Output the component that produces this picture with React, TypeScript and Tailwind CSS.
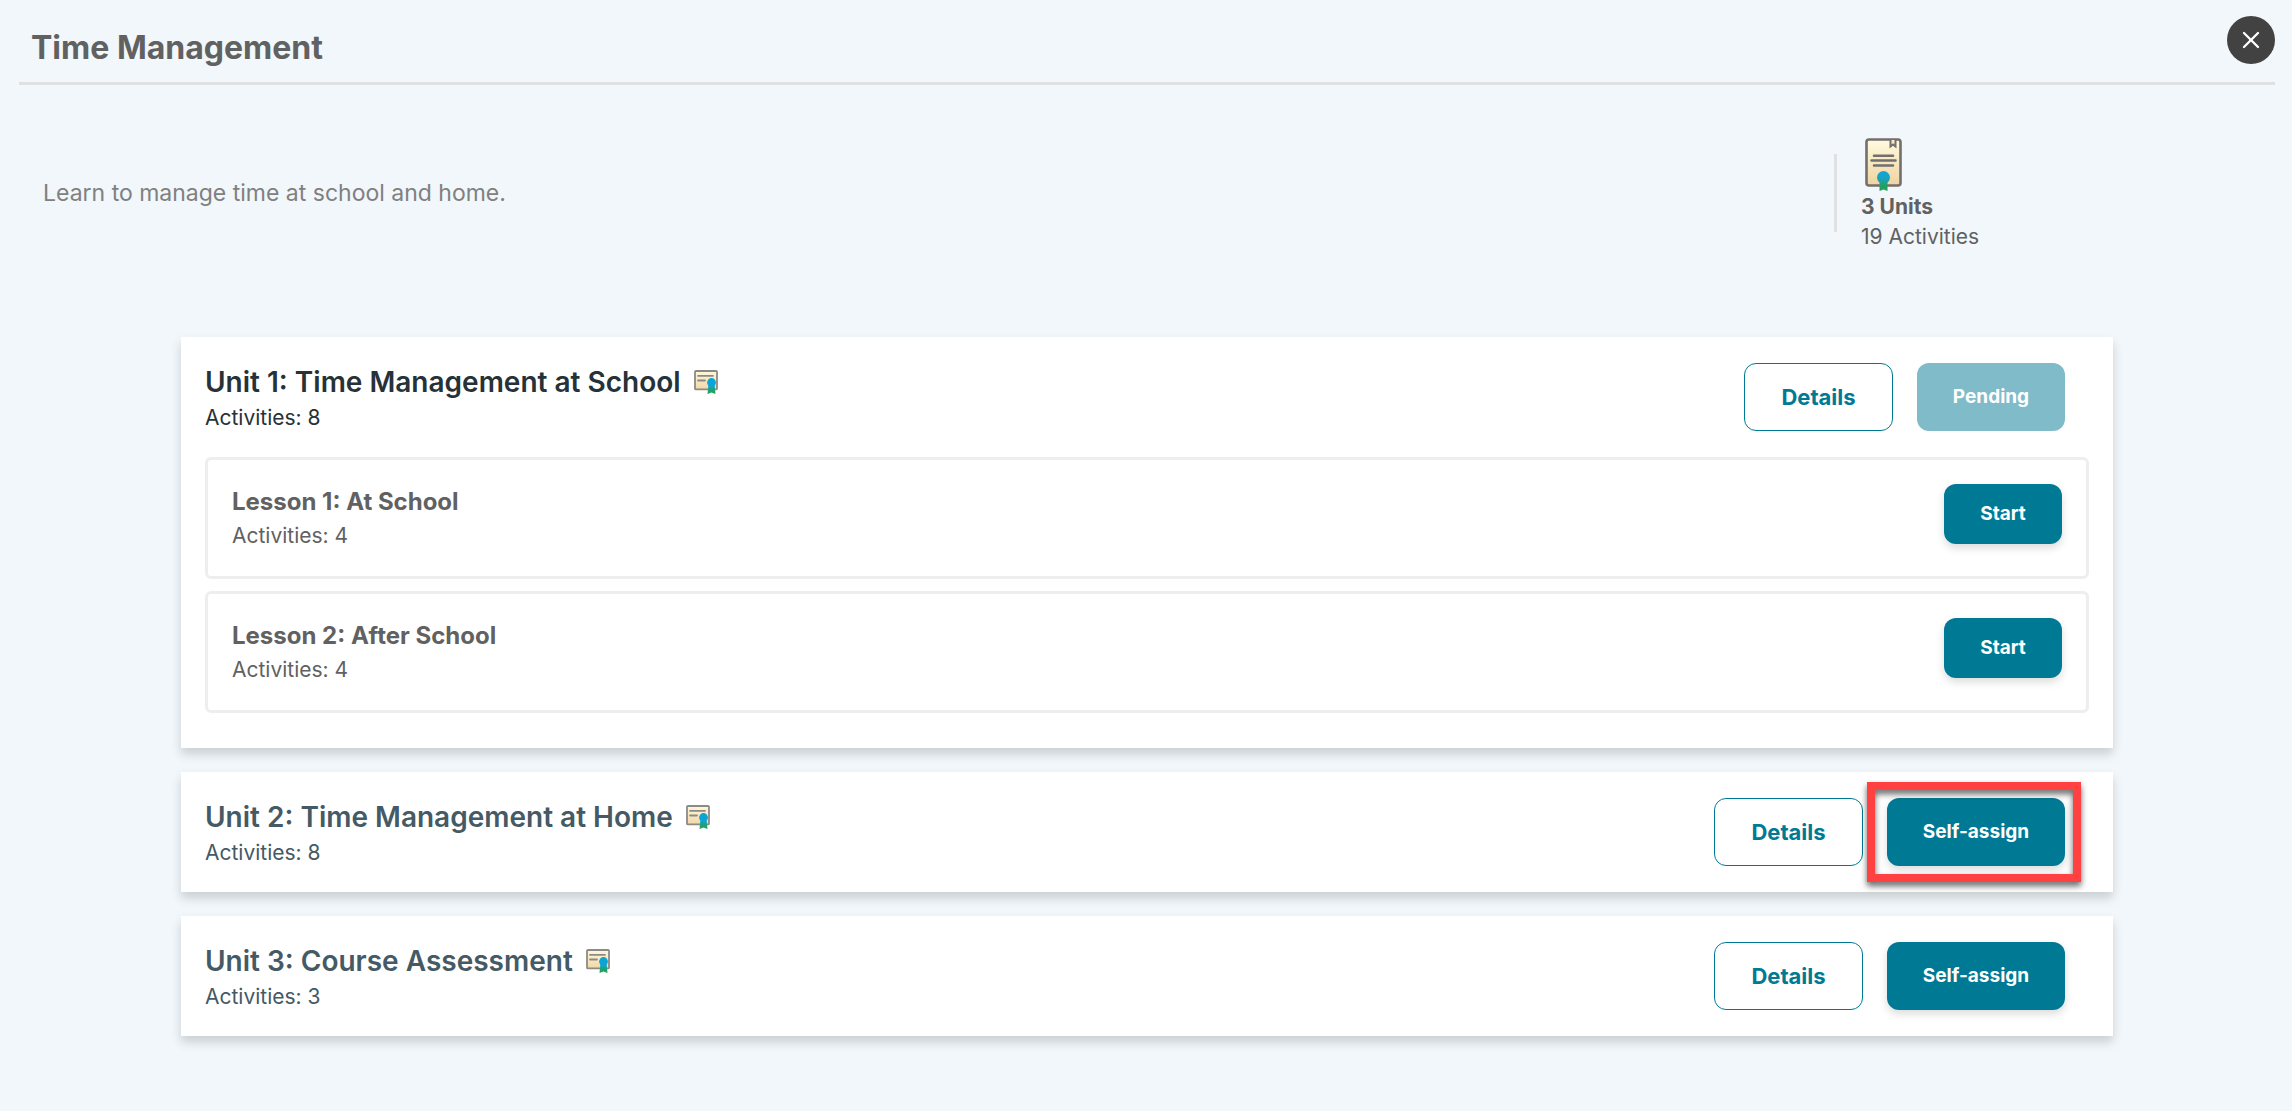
import { X } from 'lucide-react';

interface Lesson {
  title: string;
  activities: number;
}

interface Unit {
  title: string;
  activities: number;
  pending?: boolean;
  highlighted?: boolean;
  lessons?: Lesson[];
}

const units: Unit[] = [
  {
    title: 'Unit 1: Time Management at School',
    activities: 8,
    pending: true,
    lessons: [
      { title: 'Lesson 1: At School', activities: 4 },
      { title: 'Lesson 2: After School', activities: 4 },
    ],
  },
  { title: 'Unit 2: Time Management at Home', activities: 8, highlighted: true },
  { title: 'Unit 3: Course Assessment', activities: 3 },
];

function CourseIcon() {
  return (
    <svg width="42" height="58" viewBox="0 0 42 58" fill="none" aria-hidden="true">
      <defs>
        <linearGradient id="course-paper" x1="0" y1="0" x2="0" y2="1">
          <stop offset="0" stopColor="#fffbe0" />
          <stop offset="1" stopColor="#f0d3a0" />
        </linearGradient>
        <linearGradient id="course-ribbon" gradientUnits="userSpaceOnUse" x1="0" y1="37" x2="0" y2="57">
          <stop offset="0.3" stopColor="#16a3cc" />
          <stop offset="0.8" stopColor="#22a05c" />
        </linearGradient>
      </defs>
      <rect x="5.500" y="5.500" width="34" height="46" rx="2.500" fill="url(#course-paper)" stroke="#736f6c" strokeWidth="2.600" />
      <path d="M29.500 6v6.500l2.500-2 2.500 2V6" fill="#f6e9c6" stroke="#736f6c" strokeWidth="2" />
      <path d="M13 21.700h19M10.500 26.500h24M13 31.500h19" stroke="#736f6c" strokeWidth="2.600" strokeLinecap="round" />
      <path d="M18.500 46v11l4-1.500 4 1.500V46z" fill="url(#course-ribbon)" />
      <circle cx="22.500" cy="43.500" r="6.500" fill="url(#course-ribbon)" />
    </svg>
  );
}

function CertificateIcon() {
  return (
    <svg width="26" height="26" viewBox="0 0 26 26" fill="none" aria-hidden="true">
      <defs>
        <linearGradient id="cert-paper" x1="0" y1="0" x2="0" y2="1">
          <stop offset="0" stopColor="#fff8dc" />
          <stop offset="1" stopColor="#f2d7a6" />
        </linearGradient>
        <linearGradient id="cert-ribbon" gradientUnits="userSpaceOnUse" x1="0" y1="9" x2="0" y2="25">
          <stop offset="0.5" stopColor="#08a5d6" />
          <stop offset="0.8" stopColor="#22a262" />
        </linearGradient>
      </defs>
      <rect x="2" y="2" width="22" height="18.400" rx="1" fill="url(#cert-paper)" stroke="#8c8a87" strokeWidth="1.800" />
      <path d="M5 6.800h15M5 11.500h7" stroke="#8c8a87" strokeWidth="1.800" strokeLinecap="round" />
      <path d="M15.500 15l-1 10 4-1.500 4 1.500-1-10z" fill="url(#cert-ribbon)" />
      <circle cx="18.500" cy="13.500" r="4.400" fill="url(#cert-ribbon)" />
    </svg>
  );
}

function LessonRow({ lesson }: { lesson: Lesson }) {
  return (
    <li className="flex items-start justify-between rounded-md border-3 border-[#eeeeee] p-6 text-[#616161]">
      <div>
        <h3 className="text-[24px] leading-9 font-bold">{lesson.title}</h3>
        <p className="text-[21px] leading-8">Activities: {lesson.activities}</p>
      </div>
      <button
        type="button"
        className="h-[60px] min-w-[118px] rounded-xl bg-[#007a94] text-[19px] font-bold text-white shadow-[0_4px_8px_rgba(0,0,0,0.14)] hover:bg-[#006a81]"
      >
        Start
      </button>
    </li>
  );
}

function UnitCard({ unit }: { unit: Unit }) {
  return (
    <section className="bg-white shadow-[0_6px_10px_rgba(0,0,0,0.17)]">
      <div
        className={`flex items-center justify-between py-[23px] pr-12 pl-6 ${unit.lessons ? 'text-[#263238]' : 'text-[#455a64]'}`}
      >
        <div className="pt-0.5">
          <div className="flex items-center gap-3">
            <h2 className="text-[28px] leading-10 font-semibold">{unit.title}</h2>
            <CertificateIcon />
          </div>
          <p className="text-[21px] leading-8">Activities: {unit.activities}</p>
        </div>
        <div className="flex gap-6">
          <button
            type="button"
            className="h-[68px] min-w-[149px] rounded-xl border border-[#007a94] text-[22px] font-bold text-[#007a94] hover:bg-[#f1f7fb]"
          >
            Details
          </button>
          {unit.pending ? (
            <button
              type="button"
              disabled
              className="h-[68px] min-w-[148px] rounded-xl bg-[#80bbc9] text-[19px] font-bold text-white"
            >
              Pending
            </button>
          ) : (
            <div className="relative">
              <button
                type="button"
                className="h-[68px] min-w-[178px] rounded-xl bg-[#007a94] text-[19px] font-bold text-white shadow-[0_4px_8px_rgba(0,0,0,0.14)] hover:bg-[#006a81]"
              >
                Self-assign
              </button>
              {unit.highlighted && (
                <div className="pointer-events-none absolute -top-4 -right-4 -bottom-4 -left-5 border-8 border-[#ff4141] drop-shadow-[0_4px_3px_rgba(0,0,0,0.6)]" />
              )}
            </div>
          )}
        </div>
      </div>

      {unit.lessons && (
        <ul className="flex flex-col gap-3 px-6 pb-[35px]">
          {unit.lessons.map((lesson) => (
            <LessonRow key={lesson.title} lesson={lesson} />
          ))}
        </ul>
      )}
    </section>
  );
}

export default function App() {
  return (
    <main className="min-h-screen bg-[#f1f7fb] pr-[17px] pl-[19px] font-['Inter',sans-serif]">
      <header className="flex items-start justify-between border-b-3 border-[#e0e0e0] pt-4 pb-0.5">
        <h1 className="pl-3 text-[32px] leading-16 font-bold text-[#616161]">Time Management</h1>
        <button
          type="button"
          aria-label="Close"
          className="flex h-12 w-12 items-center justify-center rounded-full bg-[#424242] text-white hover:bg-[#616161]"
        >
          <X className="h-7 w-7" strokeWidth={2} />
        </button>
      </header>

      <div className="flex items-center justify-between pt-[49px] pb-[85px]">
        <p className="pl-6 text-[23px] leading-8 text-[#808080]">Learn to manage time at school and home.</p>
        <div className="flex w-[441px] shrink-0 items-center gap-6">
          <div className="h-[78px] w-[3px] bg-[#e0e0e0]" />
          <div className="text-[21px] leading-[30px] text-[#616161]">
            <CourseIcon />
            <p className="font-bold">3 Units</p>
            <p>19 Activities</p>
          </div>
        </div>
      </div>

      <div className="flex flex-col gap-6 px-[162px] pb-12">
        {units.map((unit) => (
          <UnitCard key={unit.title} unit={unit} />
        ))}
      </div>
    </main>
  );
}
